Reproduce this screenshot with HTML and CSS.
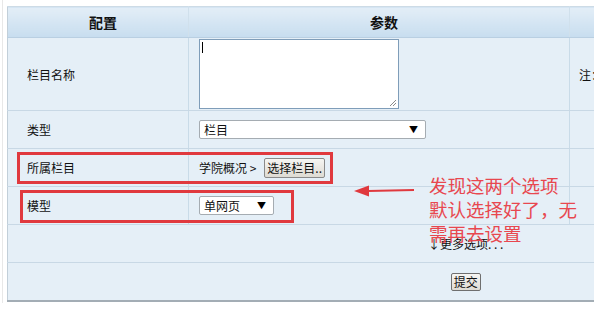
FILE: index.html
```html
<!DOCTYPE html>
<html lang="zh">
<head>
<meta charset="utf-8">
<link rel="stylesheet" href="styles.css">
</head>
<body>
<div class="page">
  <table class="form">
    <colgroup>
      <col class="c1"><col class="c2"><col class="c3">
    </colgroup>
    <thead>
      <tr><th class="h1">配置</th><th class="h2">参数</th><th class="h3"></th></tr>
    </thead>
    <tbody>
      <tr class="r-tall">
        <td class="lbl">栏目名称</td>
        <td class="val"><div class="textarea"><span class="caret"></span><svg class="grip" width="9" height="9" viewBox="0 0 9 9"><path d="M8 2 L2 8 M8 5 L5 8" stroke="#8a8a8a" stroke-width="1"/></svg></div></td>
        <td class="note">注：栏目名称</td>
      </tr>
      <tr class="r">
        <td class="lbl">类型</td>
        <td class="val"><div class="select wide"><span>栏目</span><span class="arr">▼</span></div></td>
        <td class="note"></td>
      </tr>
      <tr class="r">
        <td class="lbl">所属栏目</td>
        <td class="val"><div class="inline"><span>学院概况 &gt;</span><span class="btn">选择栏目..</span></div></td>
        <td class="note"></td>
      </tr>
      <tr class="r">
        <td class="lbl">模型</td>
        <td class="val"><div class="select narrow"><span>单网页</span><span class="arr">▼</span></div></td>
        <td class="note"></td>
      </tr>
      <tr class="r">
        <td class="center" colspan="3">↓更多选项. . .</td>
      </tr>
      <tr class="r last">
        <td class="center" colspan="3"><span class="submit">提交</span></td>
      </tr>
    </tbody>
  </table>

  <div class="mark m1"></div>
  <div class="mark m2"></div>
  <svg class="arrow" width="62" height="14" viewBox="0 0 62 14"><path d="M14 6 L60 5" stroke="#e0393e" stroke-width="2"/><path d="M0 6 L15 0.5 L15 11.5 Z" fill="#e0393e"/></svg>
  <div class="anno">发现这两个选项<br>默认选择好了，无<br>需再去设置</div>
</div>
</body>
</html>
```

FILE: styles.css
```css
html, body {
  margin: 0;
  padding: 0;
  overflow: hidden;
  background: #fff;
}
body {
  width: 594px;
  height: 309px;
  font-family: "Noto Sans CJK SC", "Noto Sans", sans-serif;
  font-size: 12px;
  color: #111;
}
.page {
  position: relative;
  padding: 6px 0 0 4px;
  border-left: 1px solid #e8e8e8;
  margin-left: 2px;
  height: 303px;
  box-sizing: border-box;
}
.form {
  border-collapse: collapse;
  table-layout: fixed;
  width: 916px;
  background: #e5eff7;
  border-left: 1px solid #c2cfd9;
  border-top: 1px solid #cddbe6;
  border-bottom: 2px solid #a3adb5;
}
.c1 { width: 181px; }
.c2 { width: 381px; }
.c3 { width: 354px; }
th {
  height: 30px;
  padding: 0;
  background: linear-gradient(#e3eef7, #c7ddef);
  font-size: 14px;
  font-weight: bold;
  color: #111;
  text-align: center;
  border-bottom: 1px solid #b9cfe2;
  border-right: 1px solid #d0e0ec;
}
.h1, .h2 { padding-left: 10px; }
td {
  padding: 0;
  border-bottom: 1px solid #c8d8e5;
  border-right: 1px solid #c9dbe8;
  vertical-align: middle;
}
.r-tall td { height: 72px; }
.r td { height: 37px; }
.last td { border-bottom: none; }
.lbl { padding-left: 19px; }
.val { padding-left: 10px; }
.note { padding-left: 9px; white-space: nowrap; overflow: hidden; }
.center { text-align: center; border-right: none; }

.textarea {
  position: relative;
  width: 198px;
  height: 68px;
  background: #fff;
  border: 1px solid #7f9db9;
}
.caret {
  position: absolute;
  left: 2px;
  top: 2px;
  width: 1px;
  height: 11px;
  background: #000;
}
.grip {
  position: absolute;
  right: 1px;
  bottom: 1px;
}
.select {
  display: flex;
  align-items: center;
  justify-content: space-between;
  height: 17px;
  background: #fff;
  border: 1px solid #a5acb2;
  border-radius: 2px;
  padding: 0 7px 0 4px;
  box-sizing: content-box;
  line-height: 17px;
}
.wide { width: 214px; }
.narrow { width: 62px; }
.arr { font-size: 9px; color: #000; }
.inline {
  display: flex;
  align-items: center;
  gap: 8px;
}
.btn {
  display: inline-block;
  height: 18px;
  line-height: 18px;
  padding: 0 2px;
  border: 1px solid #8a8a8a;
  border-radius: 2px;
  background: linear-gradient(#f6f5f2, #dedbd3);
}
.submit {
  display: inline-block;
  height: 16px;
  line-height: 16px;
  padding: 0 2px;
  border: 1px solid #6f6f6f;
  border-radius: 2px;
  background: linear-gradient(#f6f5f2, #dedbd3);
}
.mark {
  position: absolute;
  border: 3px solid #e0393e;
  box-sizing: border-box;
}
.m1 { left: 14px; top: 152px; width: 316px; height: 32px; }
.m2 { left: 17px; top: 190px; width: 274px; height: 33px; }
.arrow { position: absolute; left: 351px; top: 185px; }
.anno {
  position: absolute;
  left: 426px;
  top: 173px;
  font-size: 18.5px;
  line-height: 24px;
  color: #e8474f;
  white-space: nowrap;
}
```
